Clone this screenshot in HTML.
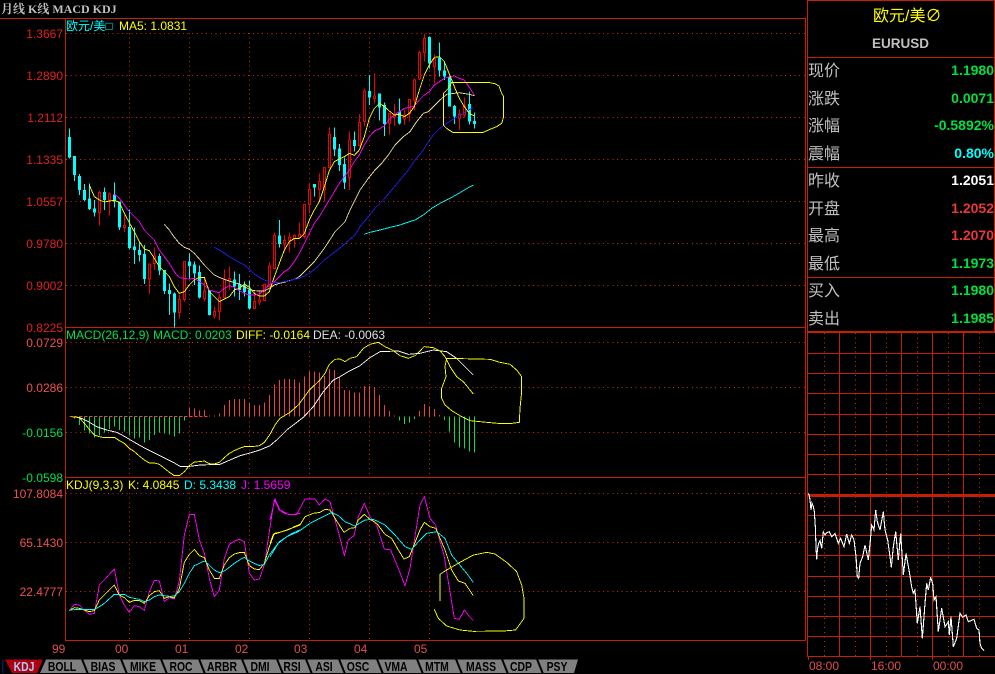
<!DOCTYPE html>
<html><head><meta charset="utf-8"><title>EURUSD</title>
<style>
html,body{margin:0;padding:0;background:#000;width:995px;height:674px;overflow:hidden}
svg{display:block;position:absolute;left:0;top:0}
text{font-family:"Liberation Sans","Noto Sans CJK SC",sans-serif}
.ax{font-size:12px;text-anchor:end}
.lb{font-size:12px}
.cn{font-size:16px;fill:#c0c0c0;font-family:"Liberation Sans","WenQuanYi Zen Hei","Noto Sans CJK SC",sans-serif}
.v{font-size:14px;font-weight:bold;text-anchor:end}
.t{font-size:13px;font-weight:bold;fill:#000;text-anchor:middle}
.p{fill:none;stroke-width:2.7;stroke-linejoin:round}
</style></head>
<body>
<svg width="995" height="674" viewBox="0 0 995 674" xmlns="http://www.w3.org/2000/svg">
<rect width="995" height="674" fill="#000"/>

<!-- grid dotted -->
<g shape-rendering="crispEdges" fill="none" stroke="#d02808" stroke-width="1" stroke-dasharray="1 3.67">
<path d="M66 33.5H806M66 75.5H806M66 117.5H806M66 159.5H806M66 201.5H806M66 243.5H806M66 285.5H806"/>
<path d="M129.5 33V327M189.5 33V327M249.5 33V327M309.5 33V327M369.5 33V327M429.5 33V327"/>
<path d="M66 342.5H806M66 387.5H806M66 432.5H806"/>
<path d="M129.5 342V477M189.5 342V477M249.5 342V477M309.5 342V477M369.5 342V477M429.5 342V477"/>
<path d="M66 493.5H806M66 542.5H806M66 591.5H806"/>
<path d="M129.5 493V640M189.5 493V640M249.5 493V640M309.5 493V640M369.5 493V640M429.5 493V640"/>
</g>

<!-- frames -->
<g shape-rendering="crispEdges" fill="none" stroke="#c42000" stroke-width="1">
<path d="M0 18.5H806M65.5 18V640M66 327.5H806M66 477.5H806M65 640.5H806M805.5 18V640"/>
<path d="M807.5 0V657M994.5 0V332M807 0.5H995M807 57.5H995M807 167.5H995M807 277.5H995"/>
</g>

<!-- candles -->
<g transform="scale(.333333)" shape-rendering="crispEdges">
<path fill="none" stroke="#00ffff" stroke-width="3" d="M208.5 385V475M223.5 468V543M238.5 522V585M253.5 552V603M268.5 550V630M283.5 600V650M313.5 562V630M343.5 547V623M358.5 605V690M388.5 628V748M403.5 682V792M418.5 725V785M433.5 735V852M478.5 760V825M493.5 810V882M508.5 850V945M523.5 878V982M568.5 760V838M583.5 785V855M598.5 797V895M628.5 870V947M703.5 815V890M718.5 822V900M733.5 845V890M748.5 842V928M838.5 660V742M943.5 552V590M1003.5 382V468M1018.5 432V513M1033.5 472V567M1063.5 395V455M1108.5 225V315M1138.5 280V362M1153.5 307V408M1198.5 295V373M1288.5 110V205M1318.5 128V230M1333.5 188V240M1348.5 230V320M1363.5 315V372M1408.5 275V373M1423.5 337V386"/>
<path fill="#00ffff" d="M204 411h9V473h-9zM219 468h9V525h-9zM234 528h9V570h-9zM249 570h9V600h-9zM264 595h9V627h-9zM279 625h9V638h-9zM309 576h9V600h-9zM339 583h9V605h-9zM354 605h9V682h-9zM384 681h9V744h-9zM399 740h9V750h-9zM414 750h9V765h-9zM429 762h9V837h-9zM474 768h9V812h-9zM489 810h9V873h-9zM504 870h9V882h-9zM519 880h9V938h-9zM564 785h9V798h-9zM579 793h9V820h-9zM594 816h9V892h-9zM624 870h9V945h-9zM699 838h9V860h-9zM714 852h9V870h-9zM729 857h9V876h-9zM744 870h9V925h-9zM834 706h9V732h-9zM939 552h9V562h-9zM999 411h9V448h-9zM1014 445h9V495h-9zM1029 492h9V547h-9zM1059 420h9V438h-9zM1104 273h9V293h-9zM1134 280h9V322h-9zM1149 315h9V372h-9zM1194 335h9V370h-9zM1284 111h9V190h-9zM1314 172h9V212h-9zM1329 212h9V230h-9zM1344 232h9V320h-9zM1359 318h9V350h-9zM1404 312h9V365h-9zM1419 363h9V372h-9z"/>
<path fill="none" stroke="#f00000" stroke-width="3" d="M298.5 573V677M328.5 577V647M373.5 645V696M448.5 790V882M463.5 742V810M538.5 883V955M553.5 783V905M613.5 830V905M643.5 920V955M658.5 882V962M673.5 808V895M688.5 800V870M763.5 870V927M778.5 870V915M793.5 850V903M808.5 788V862M823.5 697V808M853.5 705V758M868.5 697V758M883.5 703V742M898.5 668V715M913.5 612V715M928.5 547V640M958.5 520V605M973.5 502V605M988.5 382V505M1048.5 395V570M1078.5 342V440M1093.5 265V380M1123.5 220V310M1168.5 340V405M1183.5 312V378M1213.5 328V375M1228.5 298V365M1243.5 235V332M1258.5 152V240M1273.5 102V185M1303.5 163V250M1378.5 328V390M1393.5 292V352"/>
<path fill="#000" stroke="#f00000" stroke-width="3" d="M295.5 577h6V638h-6zM325.5 582h6V600h-6zM370.5 676h6V682h-6zM445.5 792h6V837h-6zM460.5 768h6V790h-6zM535.5 898h6V938h-6zM550.5 784h6V898h-6zM610.5 873h6V895h-6zM640.5 935h6V948h-6zM655.5 892h6V935h-6zM670.5 838h6V892h-6zM685.5 835h6V843h-6zM760.5 905h6V925h-6zM775.5 900h6V906h-6zM790.5 853h6V902h-6zM805.5 798h6V860h-6zM820.5 707h6V805h-6zM850.5 722h6V732h-6zM865.5 712h6V722h-6zM880.5 706h6V715h-6zM895.5 703h6V712h-6zM910.5 613h6V710h-6zM925.5 568h6V614h-6zM955.5 544h6V568h-6zM970.5 503h6V570h-6zM985.5 403h6V503h-6zM1045.5 420h6V532h-6zM1075.5 367h6V437h-6zM1090.5 273h6V365h-6zM1120.5 288h6V296h-6zM1165.5 340h6V370h-6zM1180.5 345h6V350h-6zM1210.5 345h6V357h-6zM1225.5 298h6V340h-6zM1240.5 240h6V300h-6zM1255.5 157h6V237h-6zM1270.5 115h6V157h-6zM1300.5 175h6V200h-6zM1375.5 342h6V356h-6zM1390.5 318h6V345h-6z"/>

<!-- MA lines -->
<polyline class="p" stroke="#ffff00" points="268,555 283,590 298,600 313,606 328,603 343,601 358,607 373,640 388,668 403,695 418,725 433,747 448,752 463,775 478,800 493,815 508,830 523,860 538,880 553,875 568,855 583,840 598,832 613,832 628,875 643,890 658,905 673,897 688,890 703,870 718,865 733,852 748,862 763,880 778,888 793,888 808,875 823,830 838,790 853,750 868,725 883,715 898,715 913,700 928,660 943,630 958,605 973,560 988,512"/>
<polyline class="p" stroke="#ff00ff" points="343,582 358,595 373,615 388,635 403,650 418,665 433,690 448,705 463,720 478,750 493,770 508,790 523,815 538,833 553,835 568,837 583,835 598,845 613,855 628,870 643,875 658,878 673,865 688,857 703,862 718,872 733,880 748,885 763,885 778,882 793,868 808,855 823,845 838,830 853,815 868,805 883,785 898,760 913,730 928,700 943,670 958,650 973,625 988,600"/>
<polyline class="p" stroke="#e8e090" points="493,673 508,690 523,712 538,730 553,742 568,748 583,760 598,777 613,795 628,810 643,825 658,832 673,838 688,843 703,848 718,852 733,860 748,868 763,872 778,873 793,873 808,865 823,855 838,850 853,847 868,842 883,838 898,830 913,815 928,800 943,785 958,765 973,745 988,722"/>
<polyline class="p" stroke="#2020f0" points="643,742 658,750 673,760 688,770 703,778 718,787 733,795 748,808 763,822 778,832 793,840 808,845 823,848 838,848 853,845 868,843 883,838 898,835 913,828 928,820 943,808 958,795 973,780 988,768"/>
<g transform="translate(900,0)">
<polyline class="p" stroke="#e8e090" points="88,722 105,695 135,665 150,630 165,600 180,570 205,535 225,510 245,490 265,465 285,435 310,410 330,395 350,365 370,340 385,335 400,320 420,300 440,283 478,278 508,283 523,287"/>
<polyline class="p" stroke="#2020f0" points="88,768 105,755 125,740 150,718 165,705 180,680 205,650 225,625 250,600 275,570 300,540 325,510 345,480 370,450 385,425 400,405 420,385 440,370 465,355 490,340 505,330 520,323"/>
<polyline class="p" stroke="#00ffff" points="192,703 210,697 240,690 270,682 300,675 320,668 345,660 370,645 395,625 420,610 450,595 480,578 505,563 520,555"/>
<polyline class="p" stroke="#ff00ff" points="88,600 103,575 118,550 133,530 148,510 163,485 178,465 193,435 208,410 223,393 238,387 253,378 268,358 283,345 298,335 313,325 328,322 343,318 358,300 373,285 388,275 403,255 418,245 433,235 448,230 463,228 478,235 493,240 508,262 523,285"/>
<polyline class="p" stroke="#ffff00" points="88,512 103,485 118,477 133,470 148,460 163,466 178,450 193,410 208,355 223,325 238,310 253,320 268,333 283,345 298,343 313,350 328,340 343,320 358,270 373,225 388,195 403,172 418,170 433,185 448,222 463,260 478,295 493,320 508,340 523,348"/>
<polyline class="p" stroke="#ffff00" points="455,247 565,247 585,251 597,258 605,280 611,290 611,350 605,370 590,380 570,388 550,397 458,397 440,385 430,375 430,280 445,265 455,247"/>
</g>
</g>

<!-- MACD -->
<g transform="translate(0,325) scale(.333333)" shape-rendering="crispEdges">
<path fill="none" stroke="#f04040" stroke-width="3" stroke-dasharray="9 6" d="M208 274.5H625"/>
<path fill="none" stroke="#00e050" stroke-width="3" d="M223.5 274V280M238.5 274V300M253.5 274V317M268.5 274V325M283.5 274V338M298.5 274V332M313.5 274V322M328.5 274V312M343.5 274V305M358.5 274V315M373.5 274V320M388.5 274V330M403.5 274V340M418.5 274V338M433.5 274V353M448.5 274V345M463.5 274V330M478.5 274V323M493.5 274V325M508.5 274V328M523.5 274V334M538.5 274V326M553.5 274V287"/>
<path fill="none" stroke="#f04040" stroke-width="3" d="M568.5 274V248M583.5 274V250M598.5 274V257M613.5 274V255M628.5 274V272M643.5 274V272M658.5 274V265M673.5 274V240M688.5 274V225M703.5 274V222M718.5 274V222M733.5 274V222M748.5 274V232M763.5 274V240M778.5 274V240M793.5 274V232M808.5 274V210M823.5 274V178M838.5 274V165M853.5 274V162M868.5 274V162M883.5 274V163M898.5 274V172M913.5 274V155M928.5 274V140M943.5 274V140M958.5 274V143M973.5 274V153M988.5 274V132M1003.5 274V135M1018.5 274V157M1033.5 274V195M1048.5 274V197M1063.5 274V203M1078.5 274V202M1093.5 274V183M1108.5 274V183M1123.5 274V187M1138.5 274V210M1153.5 274V240M1168.5 274V258M1183.5 274V272M1258.5 274V258M1273.5 274V237M1288.5 274V245M1303.5 274V252M1318.5 274V270"/>
<path fill="none" stroke="#00e050" stroke-width="3" d="M1198.5 274V287M1213.5 274V297M1228.5 274V293M1243.5 274V282M1333.5 274V285M1348.5 274V320M1363.5 274V353M1378.5 274V368M1393.5 274V370M1408.5 274V380M1423.5 274V383"/>
<polyline class="p" stroke="#ffffff" points="215,275 240,278 265,290 290,305 320,315 350,322 375,335 400,350 430,367 460,382 490,397 520,412 540,424 570,424 600,420 660,418 690,405 720,392 750,384 780,375 810,362"/>
<polyline class="p" stroke="#ffff00" points="215,275 238,278 253,295 268,313 283,330 298,335 313,338 328,337 343,337 358,347 373,355 388,370 403,380 418,393 433,405 448,414 463,414 478,418 493,430 508,442 523,452 538,452 553,440 568,422 583,411 598,410 613,408 628,416 643,417 658,412 673,398 688,385 703,377 718,370 733,365 748,364 763,364 778,362 793,352 810,328"/>
</g>
<g transform="translate(270,325) scale(.333333)" shape-rendering="crispEdges">
<polyline class="p" stroke="#ffffff" points="0,362 20,345 50,315 100,277 130,245 160,200 190,165 210,155 240,137 270,122 300,98 330,80 385,78 415,88 450,85 490,75 530,80 560,100 590,130 610,150"/>
<polyline class="p" stroke="#ffff00" points="0,328 15,300 30,280 60,262 85,240 100,220 118,195 150,165 165,145 178,118 195,103 210,102 225,110 240,100 260,95 280,70 300,58 325,52 345,65 370,77 390,92 415,100 435,92 450,78 462,65 490,68 510,78 525,95 540,125 560,155 580,170 610,207"/>
<polyline class="p" stroke="#ffff00" points="530,100 620,102 660,103 690,112 720,118 740,135 755,155 755,200 750,250 748,292 720,296 695,296 650,292 600,287 570,272 545,257 525,240 515,220 515,190 528,155 525,125 530,100"/>
</g>

<!-- KDJ -->
<g transform="translate(0,475) scale(.333333)" shape-rendering="crispEdges">
<polyline class="p" stroke="#ff00ff" points="208,407 223,388 238,390 253,405 268,418 283,415 298,330 313,315 328,298 343,282 358,360 373,390 388,412 403,392 418,395 433,406 448,350 463,316 478,318 493,380 508,368 523,372 538,318 553,180 568,118 583,118 598,195 613,235 628,310 643,365 658,345 673,250 688,208 703,198 718,193 733,200 748,295 763,315 778,312 793,270 808,170 823,73 838,105 853,115 868,118 883,118 900,115"/>
<polyline class="p" stroke="#ffff00" points="208,407 223,398 238,400 253,405 268,410 283,407 298,375 313,360 328,345 343,330 358,360 373,368 388,382 403,376 418,377 433,385 448,362 463,350 478,347 493,370 508,365 523,369 538,340 553,262 568,238 583,223 598,242 613,248 628,285 643,310 658,310 673,270 688,248 703,237 718,233 733,232 748,272 763,282 778,284 793,265 808,215 823,175 838,172 853,168 868,163 883,155 900,148"/>
<polyline class="p" stroke="#00ffff" points="208,405 238,403 283,404 298,395 313,385 343,358 373,358 388,367 418,373 433,380 448,375 463,365 478,360 508,364 523,363 538,350 553,325 568,295 583,272 598,265 613,258 628,270 643,285 658,293 673,288 688,277 703,265 718,255 733,247 748,258 763,265 778,272 793,268 808,240 823,220 838,200 853,190 868,180 883,172 900,165"/>
</g>
<g transform="translate(270,475) scale(.333333)" shape-rendering="crispEdges">
<polyline class="p" stroke="#ff00ff" points="0,135 15,72 30,105 55,118 80,118 105,72 135,72 148,90 165,72 180,80 205,170 223,242 235,195 252,182 265,125 283,85 300,125 320,150 343,222 362,225 385,280 405,332 420,280 435,185 450,90 463,65 480,130 497,150 510,200 522,240 535,320 553,430 568,433 583,405 600,427 610,437"/>
<polyline class="p" stroke="#ffff00" points="0,205 10,178 30,172 50,165 90,150 105,125 130,115 150,112 165,103 180,105 195,130 222,172 240,160 255,158 265,135 283,118 300,133 320,145 345,178 365,190 385,225 402,252 418,245 430,215 450,165 463,142 480,155 497,160 510,190 525,225 545,285 565,318 585,325 610,362"/>
<polyline class="p" stroke="#00ffff" points="0,245 25,205 50,185 85,170 120,145 150,130 185,112 205,122 225,140 255,153 285,135 310,133 345,150 375,180 405,215 425,223 450,195 470,175 500,170 525,190 545,240 565,265 590,295 610,322"/>
<polyline class="p" stroke="#ffff00" points="510,378 510,298 530,285 570,262 610,240 650,232 675,237 710,262 740,290 755,330 762,370 762,430 737,465 700,468 610,469 570,465 530,453 505,430 493,403"/>
</g>

<!-- title -->
<text x="1" y="13" style="font-family:'Liberation Serif','Noto Serif CJK SC',serif;font-size:12px;font-weight:bold;fill:#c0c0c0">月线 K线 MACD KDJ</text>

<!-- labels -->
<text class="lb" x="66" y="30" fill="#00ffff">欧元/美□</text>
<text class="lb" x="119" y="30" fill="#ffff00">MA5: 1.0831</text>
<text class="lb" x="66" y="339" fill="#00e050">MACD(26,12,9)</text>
<text class="lb" x="153" y="339" fill="#00e050">MACD: 0.0203</text>
<text class="lb" x="236" y="339" fill="#ffff00">DIFF: -0.0164</text>
<text class="lb" x="313" y="339" fill="#e0e0e0">DEA: -0.0063</text>
<text class="lb" x="66" y="489" fill="#ffff00">KDJ(9,3,3)</text>
<text class="lb" x="128" y="489" fill="#ffff00">K: 4.0845</text>
<text class="lb" x="184" y="489" fill="#00ffff">D: 5.3438</text>
<text class="lb" x="241" y="489" fill="#ff00ff">J: 1.5659</text>

<!-- y axis -->
<g fill="#e02020">
<text class="ax" x="63" y="38">1.3667</text>
<text class="ax" x="63" y="80">1.2890</text>
<text class="ax" x="63" y="122">1.2112</text>
<text class="ax" x="63" y="164">1.1335</text>
<text class="ax" x="63" y="206">1.0557</text>
<text class="ax" x="63" y="248">0.9780</text>
<text class="ax" x="63" y="290">0.9002</text>
<text class="ax" x="63" y="332">0.8225</text>
</g>
<text class="ax" x="63" y="347" fill="#f05050">0.0729</text>
<text class="ax" x="63" y="392" fill="#f05050">0.0286</text>
<text class="ax" x="63" y="437" fill="#00e050">-0.0156</text>
<text class="ax" x="63" y="482" fill="#00e050">-0.0598</text>
<text class="ax" x="63" y="498" fill="#f05050">107.8084</text>
<text class="ax" x="63" y="547" fill="#f05050">65.1430</text>
<text class="ax" x="63" y="596" fill="#f05050">22.4777</text>

<!-- x axis -->
<g fill="#e05050" font-size="12">
<text x="52" y="653">99</text><text x="115" y="653">00</text><text x="175" y="653">01</text><text x="235" y="653">02</text><text x="294" y="653">03</text><text x="354" y="653">04</text><text x="414" y="653">05</text>
</g>

<!-- tabs -->
<path d="M2 660H3.5V673H2z" fill="#101858"/>
<polygon points="46,659.5 578,659.5 574,673 40,673" fill="#808080"/>
<polygon points="5,659.5 44,659.5 38,673 12,673" fill="#b00010"/>
<g stroke="#000" stroke-width="2" fill="none">
<path d="M44 659L38 674M82 659L88 674M121 659L127 674M161 659L167 674M199 659L205 674M242 659L248 674M277 659L283 674M306 659L312 674M339 659L345 674M377 659L383 674M417 659L423 674M456 659L462 674M502 659L508 674M537 659L543 674"/>
</g>
<text class="t" transform="translate(24,671) scale(.8,1)" style="fill:#a8ccff">KDJ</text>
<text class="t" transform="translate(62,671) scale(.8,1)">BOLL</text>
<text class="t" transform="translate(103,671) scale(.8,1)">BIAS</text>
<text class="t" transform="translate(143,671) scale(.8,1)">MIKE</text>
<text class="t" transform="translate(181,671) scale(.8,1)">ROC</text>
<text class="t" transform="translate(222,671) scale(.8,1)">ARBR</text>
<text class="t" transform="translate(260,671) scale(.8,1)">DMI</text>
<text class="t" transform="translate(292,671) scale(.8,1)">RSI</text>
<text class="t" transform="translate(324,671) scale(.8,1)">ASI</text>
<text class="t" transform="translate(358,671) scale(.8,1)">OSC</text>
<text class="t" transform="translate(396,671) scale(.8,1)">VMA</text>
<text class="t" transform="translate(437,671) scale(.8,1)">MTM</text>
<text class="t" transform="translate(481,671) scale(.8,1)">MASS</text>
<text class="t" transform="translate(521,671) scale(.8,1)">CDP</text>
<text class="t" transform="translate(557,671) scale(.8,1)">PSY</text>

<!-- right panel text -->
<text x="873" y="21" style="font-size:16px;fill:#ffff00;font-family:'Liberation Sans','WenQuanYi Zen Hei','Noto Sans CJK SC',sans-serif">欧元/美∅</text>
<text x="872" y="48" style="font-size:13.5px;font-weight:bold;fill:#c0c0c0">EURUSD</text>
<g class="cn">
<text class="cn" x="808" y="76">现价</text>
<text class="cn" x="808" y="104">涨跌</text>
<text class="cn" x="808" y="131">涨幅</text>
<text class="cn" x="808" y="159">震幅</text>
<text class="cn" x="808" y="186">昨收</text>
<text class="cn" x="808" y="214">开盘</text>
<text class="cn" x="808" y="241">最高</text>
<text class="cn" x="808" y="269">最低</text>
<text class="cn" x="808" y="296">买入</text>
<text class="cn" x="808" y="324">卖出</text>
</g>
<text class="v" x="994" y="75" fill="#00e040">1.1980</text>
<text class="v" x="994" y="103" fill="#00e040">0.0071</text>
<text class="v" x="994" y="130" fill="#00e040">-0.5892%</text>
<text class="v" x="994" y="158" fill="#00ffff">0.80%</text>
<text class="v" x="994" y="185" fill="#ffffff">1.2051</text>
<text class="v" x="994" y="213" fill="#e83838">1.2052</text>
<text class="v" x="994" y="240" fill="#e83838">1.2070</text>
<text class="v" x="994" y="268" fill="#00e040">1.1973</text>
<text class="v" x="994" y="295" fill="#00e040">1.1980</text>
<text class="v" x="994" y="323" fill="#00e040">1.1985</text>

<!-- right mini chart -->
<g shape-rendering="crispEdges" fill="none" stroke="#c42000">
<path stroke="#e02808" stroke-dasharray="1 3.67" d="M824.5 333V657M855.5 333V657M886.5 333V657M917.5 333V657M948.5 333V657M979.5 333V657"/>
<path d="M839.5 333V657M870.5 333V660M901.5 333V657M932.5 333V660M963.5 333V657M808.5 657V660"/>
<path d="M807 353.5H995M807 373.5H995M807 393.5H995M807 414.5H995M807 434.5H995M807 454.5H995M807 474.5H995M807 515.5H995M807 535.5H995M807 555.5H995M807 576.5H995M807 596.5H995M807 616.5H995M807 636.5H995M807 656.5H995"/>
<path stroke-width="2" d="M807 332H995"/>
<path stroke-width="3" d="M807 495.5H995"/>
</g>
<g transform="translate(800,330) scale(.333333)" shape-rendering="crispEdges">
<polyline fill="none" stroke="#fff" stroke-width="3.3" points="25,490 28,497 30,510 33,540 36,520 40,530 43,545 46,590 48,650 50,688 52,660 56,640 60,632 65,655 70,605 75,615 80,608 88,605 95,620 105,610 115,640 122,625 132,650 140,612 148,640 155,615 162,630 168,680 172,740 176,745 180,700 188,680 195,645 205,690 212,620 215,585 222,600 227,540 232,575 240,600 250,545 255,600 263,630 270,680 274,712 280,650 287,605 295,690 302,610 310,735 318,670 327,720 335,770 340,790 345,780 352,880 360,830 367,925 375,820 380,760 385,780 392,742 398,760 402,810 408,800 415,905 425,835 435,890 445,875 448,915 453,860 460,950 470,925 480,850 488,862 498,855 505,875 522,868 530,895 537,900 540,940 545,955 552,962"/>
</g>
<g fill="#e05050" font-size="12">
<text x="809" y="670">08:00</text><text x="871" y="670">16:00</text><text x="933" y="670">00:00</text>
</g>
</svg>
</body></html>
